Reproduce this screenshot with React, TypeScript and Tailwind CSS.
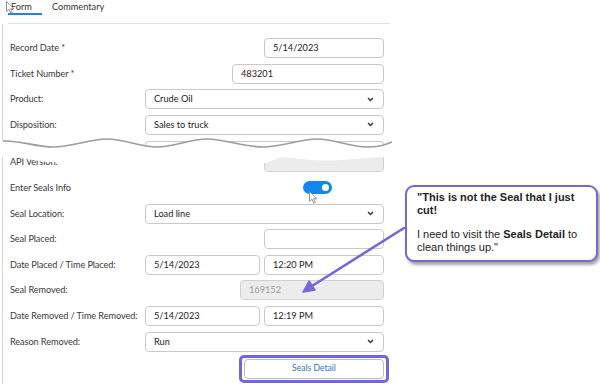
import React from "react";

const ui = { fontFamily: 'Lato, "Open Sans", sans-serif' };

const Chevron = () => (
  <svg width="7" height="5" viewBox="0 0 7 5" className="shrink-0">
    <path d="M1 1 L3.5 3.5 L6 1" fill="none" stroke="#333" strokeWidth="1.4" />
  </svg>
);

const Input = ({ value, w, disabled }: { value?: string; w: string; disabled?: boolean }) => (
  <div
    className={`${w} h-[20px] rounded-[4px] border flex items-center pl-[8px] text-[9.2px] ${
      disabled ? "bg-[#ececec] border-[#d0d0d0] text-[#9a9a9a]" : "bg-white border-[#c9c9c9] text-[#222]"
    }`}
  >
    {value}
  </div>
);

const Select = ({ value }: { value: string }) => (
  <div className="w-full h-[20px] rounded-[4px] border border-[#c9c9c9] bg-white flex items-center justify-between pl-[8px] pr-[9px] text-[9.2px] text-[#222]">
    <span>{value}</span>
    <Chevron />
  </div>
);

const Row = ({ label, children }: { label: string; children?: React.ReactNode }) => (
  <div className="flex items-center h-[20px]">
    <div className="w-[135px] shrink-0 text-[9.2px] tracking-[-0.1px] text-[#3a3a3a] whitespace-nowrap">{label}</div>
    <div className="flex-1 flex justify-end gap-[4px]">{children}</div>
  </div>
);

const Cursor = () => (
  <svg width="9" height="13" viewBox="0 0 9 13">
    <path d="M0.5 0.5 L0.5 10.5 L3 8.3 L4.8 12.3 L6.3 11.6 L4.6 7.8 L8 7.8 Z" fill="white" stroke="#8a8a8a" strokeWidth="0.9" />
  </svg>
);

export default function App() {
  return (
    <div className="relative w-[600px] h-[384px] bg-white overflow-hidden" style={ui}>
      {/* tabs */}
      <div className="ml-[8px] w-[382px] h-[24px] border-b border-[#e2e2e2] flex gap-[10px] text-[9.2px] text-[#333]">
        <div className="w-[34px] flex flex-col">
          <div className="h-[13px] leading-[13px] pl-[3px]">Form</div>
          <div className="h-[2px] bg-[#1a8ad6]" />
        </div>
        <div className="h-[13px] leading-[13px]">Commentary</div>
      </div>

      {/* form panel */}
      <div className="ml-[2px] w-[390px] h-[360px] border-l border-[#d6d6d6] pl-[7px] pr-[8px] pt-[14px] flex flex-col gap-[5.6px]">
        <Row label="Record Date *">
          <Input w="w-[120px]" value="5/14/2023" />
        </Row>
        <Row label="Ticket Number *">
          <Input w="w-[152px]" value="483201" />
        </Row>
        <Row label="Product:">
          <Select value="Crude Oil" />
        </Row>
        <Row label="Disposition:">
          <Select value="Sales to truck" />
        </Row>

        {/* torn section */}
        <div className="relative -mt-[4.6px] h-[36px] flex flex-col">
          <div className="ml-[135px] mt-[5px] h-[11px] border border-b-0 border-[#c9c9c9] rounded-t-[4px]" />
          <Row label="API Version:">
            <Input w="w-[120px]" value="" disabled />
          </Row>
          <svg className="absolute -left-[10px] top-0" width="396" height="36" viewBox="0 0 396 36">
            <path
              d="M0,5 L3,5 C20,4 35,11 53,11 S90,3 107,3 S140,11 157,11 S190,3 207,3 S245,11 263,11 S300,3 317,3 S350,11 367,11 S385,8 394,6 L394,21 C370,20 340,26 312,24 S285,19 268,26 S200,22 150,23 S80,21 62,25 S30,21 0,21 Z"
              fill="white"
            />
            <path
              d="M3,5 C20,4 35,11 53,11 S90,3 107,3 S140,11 157,11 S190,3 207,3 S245,11 263,11 S300,3 317,3 S350,11 367,11 S385,8 392,6"
              fill="none"
              stroke="#9c9c9c"
              strokeWidth="1.6"
            />
          </svg>
        </div>

        <div className="mt-[0.6px]">
          <Row label="Enter Seals Info">
            <div className="w-[81px] flex">
              <div className="w-[29px] h-[13px] rounded-full bg-[#1186ee] flex items-center justify-end pr-[3px]">
                <div className="w-[7px] h-[7px] rounded-full bg-white" />
              </div>
            </div>
          </Row>
        </div>
        <Row label="Seal Location:">
          <Select value="Load line" />
        </Row>
        <Row label="Seal Placed:">
          <Input w="w-[120px]" />
        </Row>
        <Row label="Date Placed / Time Placed:">
          <Input w="w-[115px]" value="5/14/2023" />
          <Input w="w-[120px]" value="12:20 PM" />
        </Row>
        <Row label="Seal Removed:">
          <Input w="w-[144px]" value="169152" disabled />
        </Row>
        <Row label="Date Removed / Time Removed:">
          <Input w="w-[115px]" value="5/14/2023" />
          <Input w="w-[120px]" value="12:19 PM" />
        </Row>
        <Row label="Reason Removed:">
          <Select value="Run" />
        </Row>
        <div className="flex justify-end -mt-[2.6px] -mr-[5px]">
          <div className="w-[150px] h-[28px] border-[3px] border-[#7665d8] rounded-[5px] px-[2px] py-[1px]">
            <div className="w-full h-full rounded-[4px] border border-[#aac2d6] bg-white flex items-center justify-center text-[8.6px] text-[#2f72bd]">
              Seals Detail
            </div>
          </div>
        </div>
      </div>

      {/* cursors */}
      <div className="absolute left-[6px] top-[1px]">
        <Cursor />
      </div>
      <div className="absolute left-[309px] top-[191px]">
        <Cursor />
      </div>

      {/* annotation arrow */}
      <svg className="absolute left-0 top-0 pointer-events-none" width="600" height="384" viewBox="0 0 600 384">
        <line x1="404" y1="228" x2="312" y2="286" stroke="#7766d8" strokeWidth="2.6" strokeLinecap="round" />
        <path d="M303,292 L309,281 L315,290 Z" fill="#7766d8" stroke="#7766d8" strokeWidth="1.5" strokeLinejoin="round" />
      </svg>

      {/* callout */}
      <div
        className="absolute left-[405px] top-[185px] w-[193px] h-[77px] bg-white border-2 border-[#7766d8] rounded-[9px] shadow-[2px_3px_3px_rgba(0,0,0,0.35)] pl-[10px] pt-[4px] text-[11px] leading-[13px] text-[#222]"
        style={{ fontFamily: '"Liberation Sans", Arial, sans-serif' }}
      >
        <div className="font-bold">
          "This is not the Seal that I just
          <br />
          cut!
        </div>
        <div className="mt-[11px]">
          I need to visit the <b>Seals Detail</b> to
          <br />
          clean things up."
        </div>
      </div>
    </div>
  );
}
